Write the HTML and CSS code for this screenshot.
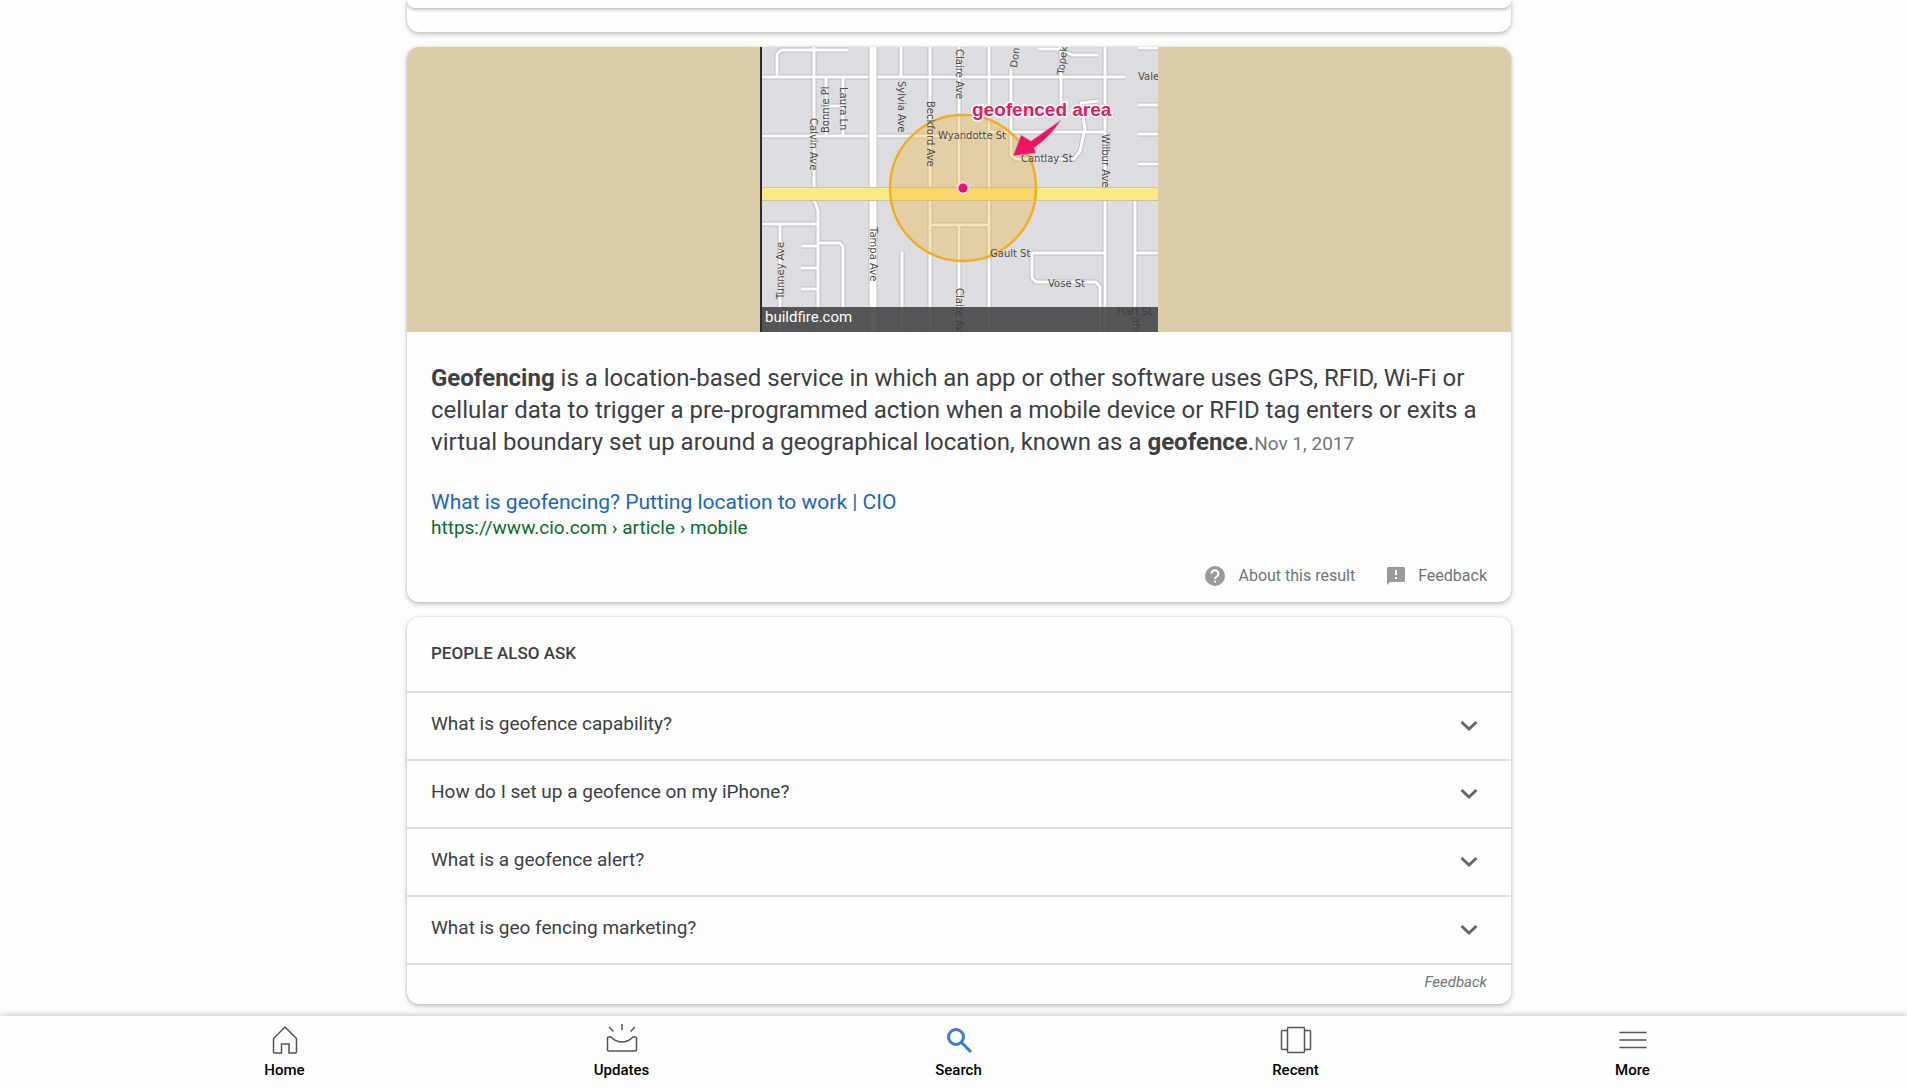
FILE: index.html
```
<!DOCTYPE html>
<html lang="en">
<head>
    <meta charset="UTF-8">
    <meta name="viewport" content="width=device-width, initial-scale=1.0">
    <title>geofencing - Search</title>
    <link rel="stylesheet" href="styles.css">
</head>
<body>
    <main class="results">
        <!-- End of the previous result -->
        <section class="card previous">
            <div class="previous-inner"></div>
        </section>

        <!-- Featured snippet -->
        <section class="card snippet">
            <div class="banner">
                <a class="map-link" href="#map">
                    <svg class="map" viewBox="0 0 398 285" role="img" aria-label="Map of a geofenced area">
                        <rect width="398" height="285" fill="#dddde1"/>
                        <g class="road-edge">
                            <use href="#roads"/>
                        </g>
                        <g class="road-fill">
                            <g id="roads">
                                <path d="M17 30V7L21 3H88M54 0V153L58 163V285M141 0V30M170 0V285M199 0V140M199 179V285M229 0V285M251 22V108L256 112H314L320 104L325 82L321 56L338 54M301 0V65M345 0V285M375 153V285"/>
                                <path d="M0 30H365M0 89H229M229 85H345M66 30V89M83 30V89M66 59H83M278 2H300L312 8H338M378 1H398M378 58H398M378 87H398M378 117H398"/>
                                <path d="M0 177H58M20 177V285M59 196H80L83 200V285M42 199H59M41 221H59M41 242H59M142 205V285M170 178H229M272 206H345M375 206H398M272 206V231L276 235H336L340 240V285"/>
                            </g>
                        </g>
                        <path d="M113 0V285" stroke="#c3c3c6" stroke-width="9"/>
                        <path d="M113 0V285" stroke="#fff" stroke-width="7"/>
                        <rect y="140" width="398" height="14" fill="#c9c3a0"/>
                        <rect y="141" width="398" height="12" fill="#fbe984"/>
                        <circle cx="203" cy="141" r="73" fill="#f3b229" fill-opacity=".32" stroke="#efae2a" stroke-width="2.5"/>
                        <circle cx="203" cy="141" r="6.5" fill="#fbd5d9"/>
                        <circle cx="203" cy="141" r="4.5" fill="#e3127c"/>
                        <g class="street">
                            <text transform="translate(50 71) rotate(90)">Calvin Ave</text>
                            <text transform="translate(69 86) rotate(-90)">Bonnie Pl</text>
                            <text transform="translate(80 40) rotate(90)">Laura Ln</text>
                            <text transform="translate(138 34) rotate(90)">Sylvia Ave</text>
                            <text transform="translate(167 54) rotate(90)">Beckford Ave</text>
                            <text transform="translate(196 2) rotate(90)">Claire Ave</text>
                            <text transform="translate(257 21) rotate(-83)">Don</text>
                            <text transform="translate(304 28) rotate(-83)">Topeka</text>
                            <text transform="translate(342 87) rotate(90)">Wilbur Ave</text>
                            <text transform="translate(110 180) rotate(90)">Tampa Ave</text>
                            <text transform="translate(24 252) rotate(-90)">Tunney Ave</text>
                            <text transform="translate(196 241) rotate(90)">Claire Ave</text>
                            <text transform="translate(373 270) rotate(90)">anna</text>
                            <text x="378" y="33">Vale</text>
                            <text x="178" y="92">Wyandotte St</text>
                            <text x="261" y="115">Cantlay St</text>
                            <text x="230" y="210">Gault St</text>
                            <text x="288" y="240">Vose St</text>
                            <text x="357" y="268">Hart St</text>
                        </g>
                        <path d="M301 73L271 94L261 88L253 109L276 106L274 101Q290 90 301 73Z" fill="#ec1561" stroke="#d9a3b3" stroke-width=".7"/>
                        <text class="area-label" x="212" y="69">geofenced area</text>
                        <rect y="260" width="398" height="25" fill="#3c3d3d" fill-opacity=".85"/>
                        <path d="M1 0V285" stroke="#2c2c2e" stroke-width="2"/>
                    </svg>
                    <span class="source">buildfire.com</span>
                </a>
            </div>
            <div class="snippet-body">
                <p class="answer"><b>Geofencing</b> is a location-based service in which an app or other software uses GPS, RFID, Wi-Fi or cellular data to trigger a pre-programmed action when a mobile device or RFID tag enters or exits a virtual boundary set up around a geographical location, known as a <b>geofence</b>.<span class="date">Nov 1, 2017</span></p>
                <a class="title" href="#cio">What is geofencing? Putting location to work | CIO</a>
                <cite class="url">https://www.cio.com › article › mobile</cite>
            </div>
            <div class="snippet-footer">
                <a href="#about">
                    <svg class="help-icon" viewBox="0 0 20 20"><circle cx="10" cy="10" r="10"/><path d="M6.6 7.6a3.4 3.4 0 1 1 5.2 2.9Q10 11.600 10 13" fill="none" stroke="#fff" stroke-width="2"/><path d="M9 14.500h2v2H9z" fill="#fff"/></svg>
                    About this result
                </a>
                <a href="#feedback">
                    <svg class="feedback-icon" viewBox="0 0 18 18"><path d="M1.500 0h15A1.500 1.500 0 0 1 18 1.500v12a1.500 1.500 0 0 1-1.500 1.500H3L0 18V1.500A1.500 1.500 0 0 1 1.500 0z"/><path d="M8 3h2v5H8zM8 10h2v2H8z" fill="#fff"/></svg>
                    Feedback
                </a>
            </div>
        </section>

        <!-- People also ask -->
        <section class="card questions">
            <h2>PEOPLE ALSO ASK</h2>
            <button class="question">What is geofence capability?
                <svg class="chevron" viewBox="0 0 18 12"><path d="M1.500 2L9 9L16.500 2"/></svg>
            </button>
            <button class="question">How do I set up a geofence on my iPhone?
                <svg class="chevron" viewBox="0 0 18 12"><path d="M1.500 2L9 9L16.500 2"/></svg>
            </button>
            <button class="question">What is a geofence alert?
                <svg class="chevron" viewBox="0 0 18 12"><path d="M1.500 2L9 9L16.500 2"/></svg>
            </button>
            <button class="question">What is geo fencing marketing?
                <svg class="chevron" viewBox="0 0 18 12"><path d="M1.500 2L9 9L16.500 2"/></svg>
            </button>
            <div class="questions-footer"><a href="#feedback">Feedback</a></div>
        </section>
    </main>

    <!-- Bottom navigation -->
    <nav class="tabs">
        <a href="#home">
            <svg viewBox="0 0 32 32"><path d="M16 3L27.500 14.500V28a1 1 0 0 1-1 1H20V20H12.500V29H5.500a1 1 0 0 1-1-1V14.500Z"/></svg>
            Home
        </a>
        <a href="#updates">
            <svg viewBox="0 0 32 32"><path d="M16 0V6M3 3L7.500 7.500M29 3L24.500 7.500M2.500 13H5C8 16 11 18 16 18S24 16 27 13H29.500a1 1 0 0 1 1 1V26a1 1 0 0 1-1 1H2.500a1 1 0 0 1-1-1V14a1 1 0 0 1 1-1Z"/></svg>
            Updates
        </a>
        <a class="active" href="#search">
            <svg viewBox="0 0 32 32"><circle cx="13" cy="13" r="7.500"/><path d="M18.500 18.500L28 28"/></svg>
            Search
        </a>
        <a href="#recent">
            <svg viewBox="0 0 32 32"><path d="M8.500 3.500H23.500a1 1 0 0 1 1 1V27.500a1 1 0 0 1-1 1H8.500a1 1 0 0 1-1-1V4.500a1 1 0 0 1 1-1ZM7.500 6.500H2.500a1 1 0 0 0-1 1V24.500a1 1 0 0 0 1 1H7.500M24.500 6.500H29.500a1 1 0 0 1 1 1V24.500a1 1 0 0 1-1 1H24.500"/></svg>
            Recent
        </a>
        <a href="#more">
            <svg viewBox="0 0 32 32"><path d="M2.500 8.500H29.500M2.500 16H29.500M2.500 23.500H29.500"/></svg>
            More
        </a>
    </nav>
</body>
</html>
```
FILE: styles.css
```
* {
    margin: 0;
    padding: 0;
    box-sizing: border-box;
}

body {
    display: flex;
    flex-direction: column;
    min-height: 100vh;
    background: #fcfdfc;
    color: #3c4043;
    font-family: Roboto, sans-serif;
}

a {
    color: inherit;
    text-decoration: none;
}

.results {
    flex: 1;
    display: flex;
    flex-direction: column;
    align-items: center;
    gap: 15px;
    padding: 0 0 10px 11px;
}

.card {
    width: 100%;
    max-width: 1104px;
    background: #fefefe;
    border-radius: 12px;
    box-shadow: 0 2px 5px rgba(32, 33, 36, 0.28), 0 0 2px rgba(32, 33, 36, 0.15);
    overflow: hidden;
}

.previous {
    padding-bottom: 24px;
    border-top-left-radius: 0;
    border-top-right-radius: 0;
}

.previous-inner {
    height: 8px;
    border-radius: 0 0 12px 12px;
    box-shadow: 0 1px 4px rgba(32, 33, 36, 0.4);
}

/* Featured snippet */
.banner {
    display: flex;
    justify-content: center;
    background: #dbcda9;
}

.map-link {
    position: relative;
    width: 398px;
}

.map {
    display: block;
    width: 100%;
}

.road-edge,
.road-fill {
    fill: none;
    stroke-linejoin: round;
}

.road-edge {
    stroke: #bfbfc2;
    stroke-width: 5px;
}

.road-fill {
    stroke: #fcfcfc;
    stroke-width: 3px;
}

.street {
    fill: #4c4c4e;
    font: 10px "DejaVu Sans", sans-serif;
}

.area-label {
    fill: #e8195f;
    stroke: #fff;
    stroke-width: 3px;
    paint-order: stroke;
    font: bold 19px "Liberation Sans", sans-serif;
}

.source {
    position: absolute;
    left: 5px;
    bottom: 5px;
    color: #fff;
    font-size: 15px;
    line-height: 20px;
}

.snippet-body {
    padding: 30px 24px 0;
}

.answer {
    margin-bottom: 30px;
    font-size: 24px;
    line-height: 32px;
}

.date {
    color: #70757a;
    font-size: 19px;
    line-height: 1;
}

.title {
    display: block;
    color: #1967c2;
    font-size: 21px;
    line-height: 28px;
}

.url {
    display: block;
    color: #0b6b2a;
    font-size: 19px;
    font-style: normal;
    line-height: 24px;
}

.snippet-footer {
    display: flex;
    justify-content: flex-end;
    gap: 32px;
    padding: 24px 24px 14px;
    color: #70757a;
    font-size: 16px;
    line-height: 24px;
}

.snippet-footer a {
    display: flex;
    align-items: center;
    gap: 13px;
}

.snippet-footer svg {
    fill: #9a9a9a;
}

.help-icon {
    width: 20px;
    height: 20px;
}

.feedback-icon {
    width: 18px;
    height: 18px;
}

/* People also ask */
.questions h2 {
    padding: 22px 24px 24px;
    font-size: 17px;
    font-weight: 500;
    line-height: 28px;
}

.question {
    display: flex;
    justify-content: space-between;
    align-items: center;
    width: 100%;
    padding: 18px 33px 22px 24px;
    background: none;
    border: none;
    border-top: 2px solid #dadfe0;
    color: #3c4043;
    font-family: inherit;
    font-size: 19px;
    line-height: 26px;
    text-align: left;
    cursor: pointer;
}

.chevron {
    width: 18px;
    height: 12px;
    margin-top: 4px;
    fill: none;
    stroke: #63676b;
    stroke-width: 3px;
}

.questions-footer {
    padding: 6px 24px 11px;
    border-top: 2px solid #dadfe0;
    color: #70757a;
    font-size: 15px;
    font-style: italic;
    line-height: 22px;
    text-align: right;
}

/* Bottom navigation */
.tabs {
    position: sticky;
    bottom: 0;
    display: flex;
    padding: 8px 106px 8px 116px;
    background: #fefefe;
    box-shadow: 0 -1px 6px rgba(32, 33, 36, 0.25);
}

.tabs a {
    flex: 1;
    display: flex;
    flex-direction: column;
    align-items: center;
    gap: 4px;
    color: #000;
    font-size: 15px;
    font-weight: 500;
    line-height: 20px;
}

.tabs svg {
    width: 32px;
    height: 32px;
    fill: none;
    stroke: #50565a;
    stroke-width: 1.5px;
}

.tabs .active svg {
    stroke: #3b7bd1;
    stroke-width: 3px;
}
```
